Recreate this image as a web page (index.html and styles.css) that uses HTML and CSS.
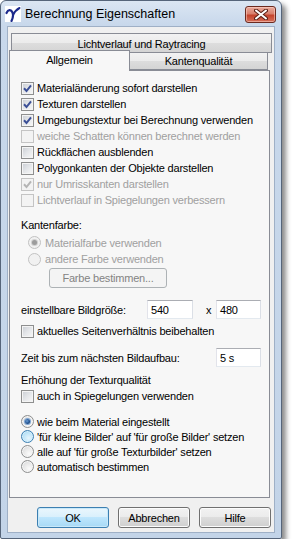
FILE: index.html
```html
<!DOCTYPE html>
<html lang="de">
<head>
<meta charset="utf-8">
<title>Berechnung Eigenschaften</title>
<link rel="stylesheet" href="styles.css">
</head>
<body>
<div class="window">
  <div class="titlebar">
    <svg class="appicon" width="16" height="16" viewBox="0 0 16 16">
      <rect x="0" y="0" width="16" height="16" fill="#ffffff"/>
      <path d="M1.5 7 C3 3.5 6 3 7.5 6.5 C8.5 9 8 12 6.5 15" fill="none" stroke="#1c2a8c" stroke-width="2.2" stroke-linecap="round"/>
      <path d="M14.5 2 C11.5 3.5 9.5 6 8 9" fill="none" stroke="#1c2a8c" stroke-width="2" stroke-linecap="round"/>
    </svg>
    <span class="title">Berechnung Eigenschaften</span>
    <span class="close">
      <svg width="14" height="11" viewBox="0 0 14 11">
        <path d="M2 1.5 L12 9.5 M12 1.5 L2 9.5" stroke="#5a2016" stroke-width="4" stroke-linecap="round"/>
        <path d="M2 1.5 L12 9.5 M12 1.5 L2 9.5" stroke="#ffffff" stroke-width="2" stroke-linecap="round"/>
      </svg>
    </span>
  </div>
  <div class="client">
    <div class="tabrow1"><span class="tab wide">Lichtverlauf und Raytracing</span></div>
    <div class="tabrow2">
      <span class="tab sel">Allgemein</span>
      <span class="tab kq">Kantenqualität</span>
    </div>
    <div class="panel">
      <div class="row"><span class="cb"><svg viewBox="0 0 9 9"><path d="M1 4.3 L3.5 7 L8 1.3"/></svg></span><span>Materialänderung sofort darstellen</span></div>
      <div class="row"><span class="cb"><svg viewBox="0 0 9 9"><path d="M1 4.3 L3.5 7 L8 1.3"/></svg></span><span>Texturen darstellen</span></div>
      <div class="row"><span class="cb"><svg viewBox="0 0 9 9"><path d="M1 4.3 L3.5 7 L8 1.3"/></svg></span><span>Umgebungstextur bei Berechnung verwenden</span></div>
      <div class="row dis"><span class="cb"></span><span>weiche Schatten können berechnet werden</span></div>
      <div class="row"><span class="cb"></span><span>Rückflächen ausblenden</span></div>
      <div class="row"><span class="cb"></span><span>Polygonkanten der Objekte darstellen</span></div>
      <div class="row dis"><span class="cb"><svg viewBox="0 0 9 9"><path d="M1 4.3 L3.5 7 L8 1.3"/></svg></span><span>nur Umrisskanten darstellen</span></div>
      <div class="row dis"><span class="cb"></span><span>Lichtverlauf in Spiegelungen verbessern</span></div>

      <div class="label kf">Kantenfarbe:</div>
      <div class="row rad dis ind first"><span class="rb on"></span><span>Materialfarbe verwenden</span></div>
      <div class="row rad dis ind"><span class="rb"></span><span>andere Farbe verwenden</span></div>
      <div class="btnline"><span class="btn disabled">Farbe bestimmen...</span></div>

      <div class="field size">
        <span class="flabel w1">einstellbare Bildgröße:</span>
        <span class="input w46">540</span>
        <span class="times">x</span>
        <span class="input w45">480</span>
      </div>
      <div class="row aspect"><span class="cb"></span><span>aktuelles Seitenverhältnis beibehalten</span></div>

      <div class="field zeit">
        <span class="flabel w2">Zeit bis zum nächsten Bildaufbau:</span>
        <span class="input w45">5 s</span>
      </div>

      <div class="label tq">Erhöhung der Texturqualität</div>
      <div class="row"><span class="cb"></span><span>auch in Spiegelungen verwenden</span></div>

      <div class="radios">
        <div class="row rad r15"><span class="rb on"></span><span>wie beim Material eingestellt</span></div>
        <div class="row rad r15"><span class="rb hover"></span><span>'für kleine Bilder' auf 'für große Bilder' setzen</span></div>
        <div class="row rad r15"><span class="rb"></span><span>alle auf 'für große Texturbilder' setzen</span></div>
        <div class="row rad r15"><span class="rb"></span><span>automatisch bestimmen</span></div>
      </div>
    </div>
    <div class="buttons">
      <span class="btn def">OK</span>
      <span class="btn">Abbrechen</span>
      <span class="btn">Hilfe</span>
    </div>
  </div>
</div>
</body>
</html>
```
FILE: styles.css
```css
html, body {
  margin: 0;
  padding: 0;
  background: #ffffff;
}
body {
  font-family: "Liberation Sans", Arial, sans-serif;
  font-size: 11px;
  color: #000;
}
.window {
  width: 282px;
  height: 539px;
  box-sizing: border-box;
  border: 1px solid #56657a;
  border-radius: 6px 6px 2px 2px;
  background: linear-gradient(#dbe6f3 0px, #c8d8eb 24px, #c3d4e8 100%);
  box-shadow: 4px 4px 5px rgba(0, 0, 0, 0.45);
  display: flex;
  flex-direction: column;
}
.titlebar {
  height: 25px;
  display: flex;
  align-items: center;
  padding: 0 5px 0 4px;
}
.appicon {
  margin-top: 1px;
  flex: none;
}
.title {
  margin-left: 4px;
  font-size: 12.5px;
  flex: 1;
  padding-top: 1px;
}
.close {
  width: 31px;
  height: 17px;
  box-sizing: border-box;
  border: 1px solid #6b2a20;
  border-radius: 3px;
  background: linear-gradient(#e9aa9c 0%, #d9806d 45%, #c4432c 55%, #d56f5a 100%);
  box-shadow: inset 0 0 0 1px rgba(255, 220, 210, 0.5);
  display: flex;
  align-items: center;
  justify-content: center;
  margin-top: 1px;
}
.client {
  flex: 1;
  margin: 0 6px 5px 6px;
  border: 1px solid #9fb0c6;
  background: #f0f0f0;
  display: flex;
  flex-direction: column;
  letter-spacing: -0.2px;
}
.tab {
  box-sizing: border-box;
  border: 1px solid #898c95;
  background: linear-gradient(#f2f2f2 0%, #ebebeb 50%, #dddddd 50%, #d4d4d4 100%);
  display: flex;
  align-items: center;
  justify-content: center;
}
.tabrow1 {
  margin: 6px 0 0 3px;
  display: flex;
}
.tab.wide {
  width: 261px;
  height: 20px;
  padding-top: 1px;
}
.tabrow2 {
  display: flex;
  height: 18px;
  margin-left: 1px;
  margin-top: -1px;
  position: relative;
  z-index: 1;
}
.tab.sel {
  width: 121px;
  height: 21px;
  margin-top: -2px;
  border-bottom: none;
  background: #f7f7f7;
  padding-bottom: 3px;
}
.tab.kq {
  width: 138px;
  height: 18px;
  border-left: none;
  padding-bottom: 1px;
}
.panel {
  margin-left: 1px;
  width: 261px;
  height: 428px;
  box-sizing: border-box;
  border: 1px solid #898c95;
  background: #f7f7f7;
  padding: 9px 0 0 11px;
  margin-top: 0;
}
.row {
  display: flex;
  align-items: center;
  height: 16px;
  gap: 3px;
  white-space: nowrap;
}
.row.r15 {
  height: 15px;
}
.dis {
  color: #a0a0a0;
}
.cb {
  width: 13px;
  height: 13px;
  box-sizing: border-box;
  border: 1px solid #8e8f8f;
  background: linear-gradient(135deg, #c9cdd3 0%, #e4e6e9 50%, #f8f8f8 100%);
  box-shadow: inset 0 0 0 1px #f4f4f4;
  display: flex;
  align-items: center;
  justify-content: center;
  flex: none;
}
.cb svg {
  width: 9px;
  height: 9px;
}
.cb path {
  fill: none;
  stroke: #3b4f96;
  stroke-width: 2;
  stroke-linejoin: miter;
}
.dis .cb {
  border-color: #c4c4c4;
  background: #f3f3f3;
  box-shadow: none;
}
.dis .cb path {
  stroke: #b5b5b5;
}
.rb {
  width: 13px;
  height: 13px;
  box-sizing: border-box;
  border-radius: 50%;
  border: 1px solid #8e8f8f;
  background: radial-gradient(circle at 65% 70%, #fbfbfb 0%, #e8e8e8 50%, #cfd1d4 100%);
  box-shadow: inset 0 0 0 1px #f6f6f6;
  display: flex;
  align-items: center;
  justify-content: center;
  flex: none;
}
.rb.on::after {
  content: "";
  width: 5px;
  height: 5px;
  border-radius: 50%;
  background: radial-gradient(circle at 40% 40%, #6a9cd4 0%, #1d4e8c 60%, #0f2f60 100%);
  box-shadow: 0 0 0 1px #7fa6d3;
}
.rb.hover {
  border-color: #3c7fb1;
  background: radial-gradient(circle at 60% 65%, #e6f5fd 0%, #bde4f8 55%, #8ccbee 100%);
  box-shadow: inset 0 0 0 1px #d6effc;
}
.dis .rb {
  border-color: #c2c2c2;
  background: #f1f1f1;
  box-shadow: none;
}
.dis .rb.on::after {
  background: #9c9c9c;
  box-shadow: 0 0 0 1px #d0d0d0;
}
.row.ind {
  margin-left: 7px;
  gap: 4px;
}
.label {
  height: 16px;
  display: flex;
  align-items: center;
}
.label.kf {
  margin-top: 9px;
}
.row.first {
  margin-top: 1px;
  height: 17px;
}
.btnline {
  margin-top: 1px;
  margin-left: 28px;
  display: flex;
}
.btn {
  box-sizing: border-box;
  height: 21px;
  width: 72px;
  border: 1px solid #707070;
  border-radius: 3px;
  background: linear-gradient(#f2f2f2 0%, #ebebeb 50%, #dddddd 50%, #cfcfcf 100%);
  box-shadow: inset 0 0 0 1px #fcfcfc;
  display: flex;
  align-items: center;
  justify-content: center;
}
.btn.disabled {
  width: 118px;
  height: 20px;
  border-color: #adb2b5;
  background: #f4f4f4;
  box-shadow: none;
  color: #838383;
}
.btn.def {
  border-color: #3c7fb1;
  background: linear-gradient(#eaf6fd 0%, #d9f0fc 50%, #bee6fd 50%, #a7d9f5 100%);
  box-shadow: inset 0 0 0 1px #c8e8f9;
}
.field {
  display: flex;
  align-items: center;
  height: 19px;
  white-space: nowrap;
}
.field.size {
  margin-top: 12px;
}
.flabel.w1 {
  width: 126px;
}
.flabel.w2 {
  width: 195px;
}
.input {
  box-sizing: border-box;
  height: 19px;
  border: 1px solid;
  border-color: #abadb3 #dbdfe6 #e3e9ef #e2e3ea;
  background: #ffffff;
  padding: 0 0 0 3px;
  display: flex;
  align-items: center;
}
.w46 {
  width: 46px;
}
.w45 {
  width: 45px;
}
.times {
  width: 23px;
  padding-left: 13px;
  box-sizing: border-box;
}
.row.aspect {
  margin-top: 4px;
}
.field.zeit {
  margin-top: 9px;
}
.label.tq {
  margin-top: 5px;
}
.radios {
  margin-top: 10px;
}
.buttons {
  display: flex;
  gap: 9px;
  margin: 9px 0 0 29px;
}
```
